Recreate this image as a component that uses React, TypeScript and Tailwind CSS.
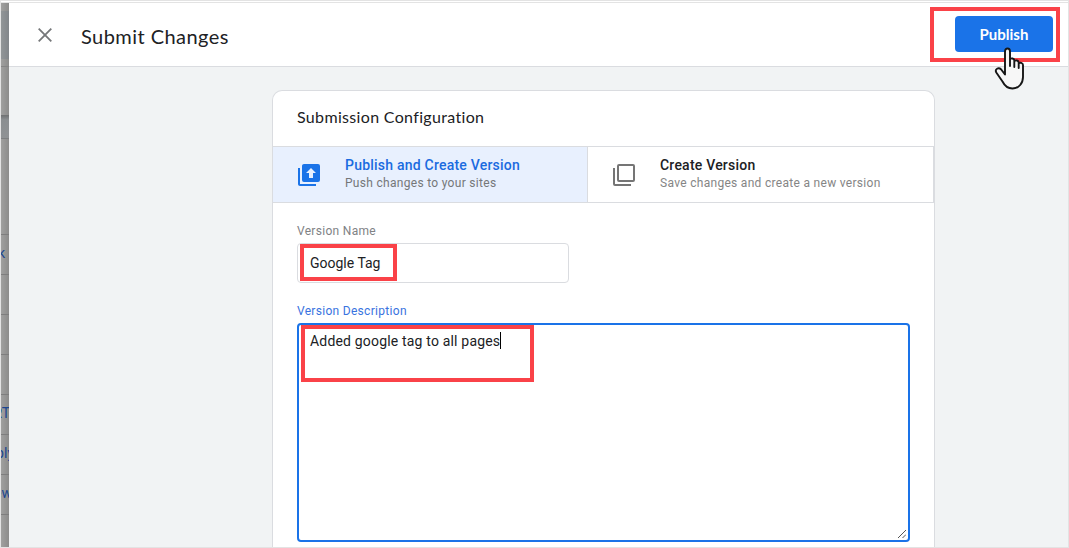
import React from "react";

const rows = [
  { h: "h-[96px]", t: "", shift: "" },
  { h: "h-[40px]", t: "k", shift: "mr-1" },
  { h: "h-[40px]", t: "", shift: "" },
  { h: "h-[40px]", t: "", shift: "" },
  { h: "h-[40px]", t: "", shift: "" },
  { h: "h-[40px]", t: "RT", shift: "-mr-px" },
  { h: "h-[40px]", t: "ply", shift: "-mr-[5px]" },
  { h: "h-[40px]", t: "ew", shift: "-mr-[3px]" },
  { h: "h-[40px]", t: "", shift: "" },
];

function Backdrop() {
  return (
    <div className="flex w-2 shrink-0 flex-col overflow-hidden bg-linear-to-r from-[#a0a09f] to-[#8c8c8b]">
      <div className="h-2 shrink-0" />
      <div className="h-12 shrink-0 bg-linear-to-r from-[#929698] to-[#82868a]" />
      <div className="h-[7px] shrink-0" />
      <div className="h-px shrink-0 bg-[#858585]" />
      <div className="h-12 shrink-0" />
      <div className="h-[24px] shrink-0 border-b border-[#7d7f80] bg-linear-to-b from-[#6f7172] from-0% via-[#8b8f91] via-20% to-[#8f9294]" />
      {rows.map((r, i) => (
        <div key={i} className={`${r.h} flex shrink-0 items-center justify-end border-b border-[#7e7e7e] pb-[3px] text-sm text-[#1b4690]`}>
          <span className={r.shift}>{r.t}</span>
        </div>
      ))}
    </div>
  );
}

function PublishIcon() {
  return (
    <svg className="h-6 w-6 shrink-0" viewBox="0 0 24 24" fill="#1a73e8">
      <path d="M1 5v16c0 1.100.9 2 2 2h16v-2H3V5z" />
      <path fillRule="evenodd" d="M7 1h14a2 2 0 0 1 2 2v14a2 2 0 0 1-2 2H7a2 2 0 0 1-2-2V3c0-1.100.9-2 2-2zm7 4-5 5h3v5h4v-5h3z" />
    </svg>
  );
}

function CopyIcon() {
  return (
    <svg className="h-6 w-6 shrink-0" viewBox="0 0 24 24" fill="none" stroke="#757575" strokeWidth="2">
      <rect x="6" y="2" width="16" height="16" rx="1" />
      <path d="M2 5v16q0 1 1 1h16" />
    </svg>
  );
}

function HandCursor() {
  return (
    <svg className="absolute left-[993px] top-[46px] h-[43px] w-[31px]" viewBox="0 0 31 43" fill="#f7f7f7" stroke="#161616" strokeWidth="1.900" strokeLinejoin="round" strokeLinecap="round">
      <path d="M11 26V4.500c0-4 5-4 5 0V19v-6.500c1-2 4.300-1 4.300 1V20v-5.500c1-2 4.400-1 4.400 1V21v-4.500c1.200-1.500 4.300-.8 4.300 1.500v12c0 6-4 11.500-10.500 11.500-5 0-8-3-10-7L2.300 25.500C.5 22 4.500 20 7.200 22.500L11 27.500z" />
    </svg>
  );
}

export default function App() {
  return (
    <div className="relative flex h-[548px] w-[1069px] flex-col overflow-hidden border border-[#e3e3e3] bg-white pt-px font-[Roboto,sans-serif] text-[#202124]">
      <div className="h-px shrink-0 bg-[#e3e3e3]" />
      <div className="flex min-h-0 flex-1">
        <Backdrop />
        <div className="flex min-w-0 flex-1 flex-col bg-[#f1f3f4]">
          <header className="flex h-16 shrink-0 items-center border-b border-[#dadce0] bg-white pl-[29px] pr-[15px]">
            <svg className="h-[14px] w-[14px]" viewBox="0 0 14 14" stroke="#757779" strokeWidth="1.800">
              <path d="M.7.7l12.600 12.600M13.300.7L.7 13.300" />
            </svg>
            <h1 className="ml-[29px] mt-0.5 flex-1 font-[Lato,sans-serif] text-[20px] leading-7 tracking-[0.45px]">Submit Changes</h1>
            <button className="mb-0.5 h-9 w-[98px] rounded bg-[#1a73e8] pt-0.5 font-[Lato,sans-serif] text-[15px] font-bold text-white">Publish</button>
          </header>
          <main className="flex flex-1 pl-[263px] pt-[23px]">
            <section className="w-[663px] rounded-t-[10px] border border-b-0 border-[#dadce0] bg-white">
              <h2 className="flex h-[55px] items-center px-6 pb-[3px] font-[Lato,sans-serif] text-base tracking-[0.33px]">Submission Configuration</h2>
              <div className="flex h-[57px] border-y border-[#dadce0]">
                <div className="flex w-[315px] items-center border-r border-[#dadce0] bg-[#e8f0fe] pl-6">
                  <PublishIcon />
                  <div className="ml-6">
                    <div className="-mt-px text-sm font-medium leading-[18px] tracking-[0.22px] text-[#1a6be0]">Publish and Create Version</div>
                    <div className="pt-px text-xs leading-[17px] tracking-[0.3px] text-[#757779]">Push changes to your sites</div>
                  </div>
                </div>
                <div className="flex flex-1 items-center border-r border-[#dadce0] pl-6">
                  <CopyIcon />
                  <div className="ml-6">
                    <div className="-mt-px text-sm font-medium leading-[18px] tracking-[0.22px]">Create Version</div>
                    <div className="pt-px text-xs leading-[17px] tracking-[0.3px] text-[#858585]">Save changes and create a new version</div>
                  </div>
                </div>
              </div>
              <div className="px-6 pt-5">
                <label className="block h-5 text-xs leading-4 tracking-[0.3px] text-[#808285]">Version Name</label>
                <div className="flex h-10 w-[272px] items-center rounded border border-[#dadce0] pl-3 text-sm">Google Tag</div>
                <label className="mt-5 block h-5 text-xs leading-4 tracking-[0.3px] text-[#3973e0]">Version Description</label>
                <div className="relative h-[219px] w-[613px] rounded border-2 border-[#1a73e8] pl-[11px] pt-1.5 text-sm leading-5 tracking-[0.18px]">
                  <span className="inline-block h-[17px] border-r border-black leading-[19px]">Added google tag to all pages</span>
                  <svg className="absolute bottom-0.5 right-0.5 h-2 w-2" viewBox="0 0 8 8" stroke="#555" strokeWidth="1">
                    <path d="M0 8L8 0M4.500 8L8 4.500" />
                  </svg>
                </div>
              </div>
            </section>
          </main>
        </div>
      </div>
      <div className="absolute left-[929px] top-[6px] h-[55px] w-[130px] border-4 border-[#fa4248]" />
      <div className="absolute left-[299px] top-[243px] h-[37px] w-[97px] border-4 border-[#fa4248]" />
      <div className="absolute left-[300px] top-[324px] h-[57px] w-[233px] border-4 border-[#fa4248]" />
      <HandCursor />
    </div>
  );
}
